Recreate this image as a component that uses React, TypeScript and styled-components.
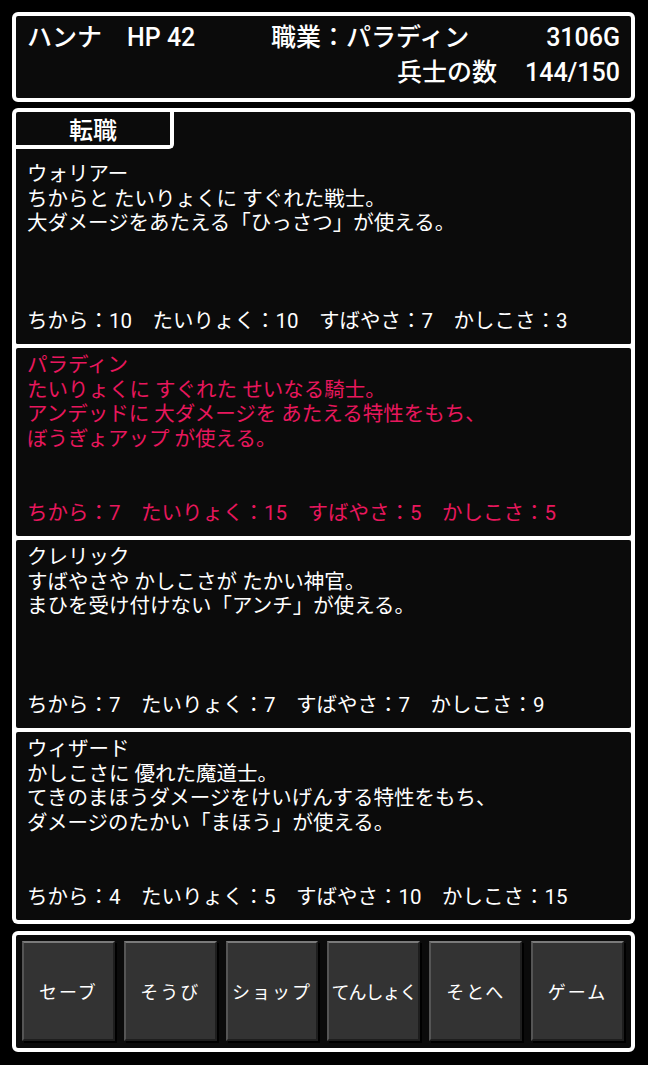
import React from "react";
import styled, { createGlobalStyle } from "styled-components";

const GlobalStyle = createGlobalStyle`
  html, body {
    margin: 0;
    padding: 0;
    background: #000;
  }
  body {
    font-family: Roboto, "Noto Sans CJK JP", "Noto Sans", sans-serif;
    color: #fff;
  }
`;

const Screen = styled.div`
  width: 648px;
  box-sizing: border-box;
  padding: 12px 13px 0 12px;
  display: flex;
  flex-direction: column;
`;

const StatusPanel = styled.header`
  box-sizing: border-box;
  height: 90px;
  border: 4px solid #fff;
  border-radius: 6px;
  background: #0b0b0b;
  padding: 4px 11px 0 11px;
  font-size: 25px;
  font-weight: 500;
  line-height: 35px;
  white-space: pre;
`;

const StatusRow = styled.div`
  display: grid;
  grid-template-columns: 244px 1fr auto;
`;

const StatusRight = styled.div`
  display: flex;
  justify-content: flex-end;
  gap: 28px;
`;

const MainPanel = styled.main`
  margin-top: 6px;
  background: #fff;
  border-radius: 6px;
  padding: 4px;
  display: flex;
  flex-direction: column;
  gap: 4px;
`;

const TabbedBlock = styled.div`
  background: #0b0b0b;
  border-radius: 2px;
  display: flex;
  flex-direction: column;
`;

const Tab = styled.div`
  box-sizing: border-box;
  width: 158px;
  height: 37px;
  border-right: 4px solid #fff;
  border-bottom: 4px solid #fff;
  border-bottom-right-radius: 5px;
  display: flex;
  align-items: center;
  justify-content: center;
  font-size: 24px;
  font-weight: 500;
  padding-bottom: 1px;
`;

const JobCard = styled.section<{ $selected?: boolean; $tabbed?: boolean }>`
  box-sizing: border-box;
  height: ${(p) => (p.$tabbed ? 195 : 188)}px;
  background: #0b0b0b;
  border-radius: 2px;
  padding: ${(p) => (p.$tabbed ? "13px" : "5px")} 10px 11px 11px;
  display: flex;
  flex-direction: column;
  justify-content: space-between;
  color: ${(p) => (p.$selected ? "#e8175d" : "#fff")};
  font-size: 20.5px;
  line-height: 24.5px;
  cursor: pointer;
`;

const JobText = styled.div`
  white-space: pre;
`;

const StatLine = styled.div`
  white-space: pre;
`;

const CommandPanel = styled.nav`
  margin-top: 7px;
  border: 4px solid #fff;
  border-radius: 6px;
  background: #0b0b0b;
  padding: 6px 7px 7px 6px;
  display: flex;
  gap: 9px;
`;

const CommandButton = styled.button<{ $compact?: boolean }>`
  flex: 1;
  box-sizing: border-box;
  height: 100px;
  margin: 0;
  padding: 0;
  background: #333;
  border-top: 2px solid #7a7a7a;
  border-left: 2px solid #555;
  border-right: 2px solid #1e1e1e;
  border-bottom: 2px solid #1e1e1e;
  box-shadow: 2px 2px 0 #000;
  color: #fff;
  font-family: "Noto Sans CJK JP", sans-serif;
  font-size: 18px;
  letter-spacing: ${(p) => (p.$compact ? "-1px" : "2px")};
  white-space: nowrap;
  cursor: pointer;
`;

type Job = {
  name: string;
  lines: string[];
  stats: [number, number, number, number];
};

const jobs: Job[] = [
  {
    name: "ウォリアー",
    lines: [
      "ちからと たいりょくに すぐれた戦士。",
      "大ダメージをあたえる「ひっさつ」が使える。",
    ],
    stats: [10, 10, 7, 3],
  },
  {
    name: "パラディン",
    lines: [
      "たいりょくに すぐれた せいなる騎士。",
      "アンデッドに 大ダメージを あたえる特性をもち、",
      "ぼうぎょアップ が使える。",
    ],
    stats: [7, 15, 5, 5],
  },
  {
    name: "クレリック",
    lines: [
      "すばやさや かしこさが たかい神官。",
      "まひを受け付けない「アンチ」が使える。",
    ],
    stats: [7, 7, 7, 9],
  },
  {
    name: "ウィザード",
    lines: [
      "かしこさに 優れた魔道士。",
      "てきのまほうダメージをけいげんする特性をもち、",
      "ダメージのたかい「まほう」が使える。",
    ],
    stats: [4, 5, 10, 15],
  },
];

const commands = ["セーブ", "そうび", "ショップ", "てんしょく", "そとへ", "ゲーム"];

const statText = (s: Job["stats"]) =>
  `ちから：${s[0]}　たいりょく：${s[1]}　すばやさ：${s[2]}　かしこさ：${s[3]}`;

function JobEntry({ job, selected, tabbed }: { job: Job; selected: boolean; tabbed?: boolean }) {
  return (
    <JobCard $selected={selected} $tabbed={tabbed}>
      <JobText>{[job.name, ...job.lines].join("\n")}</JobText>
      <StatLine>{statText(job.stats)}</StatLine>
    </JobCard>
  );
}

export default function App() {
  const current = "パラディン";
  return (
    <>
      <GlobalStyle />
      <Screen>
        <StatusPanel>
          <StatusRow>
            <span>ハンナ　HP 42</span>
            <span>職業：{current}</span>
            <span>3106G</span>
          </StatusRow>
          <StatusRight>
            <span>兵士の数</span>
            <span>144/150</span>
          </StatusRight>
        </StatusPanel>

        <MainPanel>
          <TabbedBlock>
            <Tab>転職</Tab>
            <JobEntry job={jobs[0]} selected={jobs[0].name === current} tabbed />
          </TabbedBlock>
          {jobs.slice(1).map((job) => (
            <JobEntry key={job.name} job={job} selected={job.name === current} />
          ))}
        </MainPanel>

        <CommandPanel>
          {commands.map((c) => (
            <CommandButton key={c} $compact={c.length > 4}>
              {c}
            </CommandButton>
          ))}
        </CommandPanel>
      </Screen>
    </>
  );
}
